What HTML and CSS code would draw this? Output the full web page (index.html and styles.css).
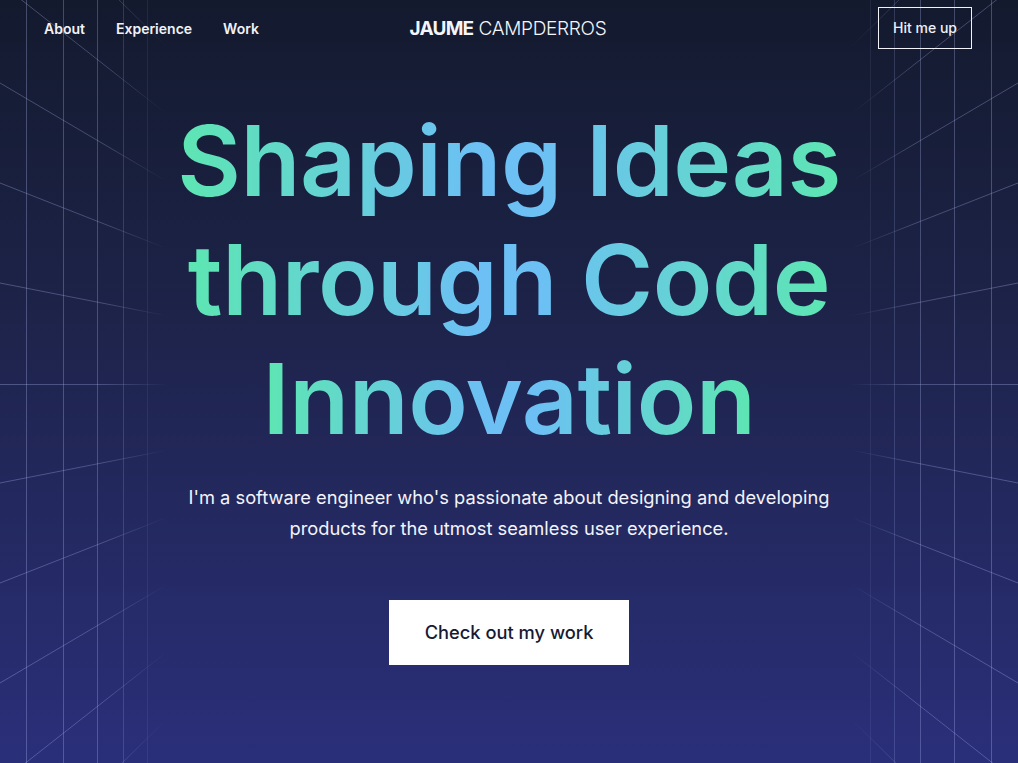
FILE: index.html
```html
<!DOCTYPE html>
<html lang="en">
<head>
<meta charset="utf-8">
<title>Jaume Campderros</title>
<link rel="stylesheet" href="styles.css">
</head>
<body>
<div class="page">
  <svg class="grid" viewBox="0 0 1018 763" preserveAspectRatio="none" aria-hidden="true">
    <defs>
      <linearGradient id="fadeL" x1="0" y1="0" x2="1018" y2="0" gradientUnits="userSpaceOnUse">
        <stop offset="0" stop-color="#fff" stop-opacity="1"/>
        <stop offset="0.10" stop-color="#fff" stop-opacity="0.9"/>
        <stop offset="0.165" stop-color="#fff" stop-opacity="0"/>
        <stop offset="0.835" stop-color="#fff" stop-opacity="0"/>
        <stop offset="0.90" stop-color="#fff" stop-opacity="0.9"/>
        <stop offset="1" stop-color="#fff" stop-opacity="1"/>
      </linearGradient>
      <mask id="wallMask" maskUnits="userSpaceOnUse" x="0" y="0" width="1018" height="763">
        <rect x="0" y="0" width="1018" height="763" fill="url(#fadeL)"/>
      </mask>
    </defs>
    <g mask="url(#wallMask)" stroke="rgba(190,198,255,0.3)" stroke-width="1" fill="none">
      <line x1="26.5" y1="0" x2="26.5" y2="763"/>
      <line x1="63.5" y1="0" x2="63.5" y2="763"/>
      <line x1="97.5" y1="0" x2="97.5" y2="763"/>
      <line x1="123.5" y1="0" x2="123.5" y2="763"/>
      <line x1="147.5" y1="0" x2="147.5" y2="763"/>
      <line x1="870.5" y1="0" x2="870.5" y2="763"/>
      <line x1="894.5" y1="0" x2="894.5" y2="763"/>
      <line x1="920.5" y1="0" x2="920.5" y2="763"/>
      <line x1="954.5" y1="0" x2="954.5" y2="763"/>
      <line x1="991.5" y1="0" x2="991.5" y2="763"/>
      <line x1="509" y1="383" x2="-509" y2="-1217"/>
      <line x1="509" y1="383" x2="-509" y2="-1017"/>
      <line x1="509" y1="383" x2="-509" y2="-817"/>
      <line x1="509" y1="383" x2="-509" y2="-617"/>
      <line x1="509" y1="383" x2="-509" y2="-417"/>
      <line x1="509" y1="383" x2="-509" y2="-217"/>
      <line x1="509" y1="383" x2="-509" y2="-17"/>
      <line x1="509" y1="383" x2="-509" y2="183"/>
      <line x1="509" y1="384.5" x2="-509" y2="384.5"/>
      <line x1="509" y1="383" x2="-509" y2="583"/>
      <line x1="509" y1="383" x2="-509" y2="783"/>
      <line x1="509" y1="383" x2="-509" y2="983"/>
      <line x1="509" y1="383" x2="-509" y2="1183"/>
      <line x1="509" y1="383" x2="-509" y2="1383"/>
      <line x1="509" y1="383" x2="-509" y2="1583"/>
      <line x1="509" y1="383" x2="-509" y2="1783"/>
      <line x1="509" y1="383" x2="1527" y2="-1217"/>
      <line x1="509" y1="383" x2="1527" y2="-1017"/>
      <line x1="509" y1="383" x2="1527" y2="-817"/>
      <line x1="509" y1="383" x2="1527" y2="-617"/>
      <line x1="509" y1="383" x2="1527" y2="-417"/>
      <line x1="509" y1="383" x2="1527" y2="-217"/>
      <line x1="509" y1="383" x2="1527" y2="-17"/>
      <line x1="509" y1="383" x2="1527" y2="183"/>
      <line x1="509" y1="384.5" x2="1527" y2="384.5"/>
      <line x1="509" y1="383" x2="1527" y2="583"/>
      <line x1="509" y1="383" x2="1527" y2="783"/>
      <line x1="509" y1="383" x2="1527" y2="983"/>
      <line x1="509" y1="383" x2="1527" y2="1183"/>
      <line x1="509" y1="383" x2="1527" y2="1383"/>
      <line x1="509" y1="383" x2="1527" y2="1583"/>
      <line x1="509" y1="383" x2="1527" y2="1783"/>
    </g>
  </svg>

  <header class="nav">
    <nav class="nav-links">
      <a href="#about">About</a>
      <a href="#experience">Experience</a>
      <a href="#work">Work</a>
    </nav>
    <a class="logo" href="#"><strong>JAUME</strong> CAMPDERROS</a>
    <div class="nav-cta">
      <a class="btn-outline" href="#contact">Hit me up</a>
    </div>
  </header>

  <main class="hero">
    <h1 class="title">
      <span class="title-line">Shaping Ideas</span>
      <span class="title-line">through Code</span>
      <span class="title-line">Innovation</span>
    </h1>
    <p class="lead">I'm a software engineer who's passionate about designing and developing products for the utmost seamless user experience.</p>
    <a class="btn-solid" href="#work">Check out my work</a>
  </main>
</div>
</body>
</html>
```

FILE: styles.css
```css
* { box-sizing: border-box; }

html, body {
  margin: 0;
  padding: 0;
}

body {
  font-family: Inter, "Noto Sans", sans-serif;
  color: #fff;
  background: #1b2045;
}

.page {
  position: relative;
  min-height: 763px;
  overflow: hidden;
  background: linear-gradient(180deg, #131a2e 0%, #1d2348 40%, #252a66 75%, #2a2f7a 100%);
}

.grid {
  position: absolute;
  inset: 0;
  width: 100%;
  height: 100%;
  z-index: 0;
  pointer-events: none;
}

.nav {
  position: relative;
  z-index: 1;
  display: grid;
  grid-template-columns: 1fr auto 1fr;
  align-items: center;
  height: 56px;
  padding: 0 46px 0 44px;
}

.nav-links {
  display: flex;
  gap: 31px;
}

.nav-links a {
  color: #f1f2f8;
  text-decoration: none;
  font-size: 14px;
  font-weight: 600;
}

.logo {
  color: #f4f5fa;
  text-decoration: none;
  font-size: 19px;
  font-weight: 300;
  letter-spacing: -0.015em;
}

.logo strong {
  font-weight: 700;
  letter-spacing: -0.04em;
}

.nav-cta {
  display: flex;
  justify-content: flex-end;
}

.btn-outline {
  display: inline-block;
  color: #eef0f8;
  text-decoration: none;
  font-size: 14px;
  font-weight: 500;
  line-height: 20px;
  padding: 10px 14px;
  border: 1px solid #f2f3f8;
}

.hero {
  position: relative;
  z-index: 1;
  display: flex;
  flex-direction: column;
  align-items: center;
  text-align: center;
  padding-top: 45px;
}

.title {
  margin: 0;
  font-size: 98px;
  font-weight: 600;
  line-height: 119px;
  letter-spacing: -0.005em;
}

.title-line {
  display: block;
  width: fit-content;
  margin: 0 auto;
  background: linear-gradient(90deg, #5de6b2 0%, #6cc0f4 45%, #6cc0f4 55%, #5de6b2 100%);
  -webkit-background-clip: text;
  background-clip: text;
  color: transparent;
}

.lead {
  margin: 24px 0 0;
  max-width: 680px;
  font-size: 18.3px;
  line-height: 31px;
  color: #f3f4fa;
}

.btn-solid {
  margin-top: 56px;
  display: inline-block;
  background: #fff;
  color: #161a33;
  text-decoration: none;
  font-size: 18.3px;
  font-weight: 500;
  line-height: 25px;
  padding: 20px 36px;
}
```
